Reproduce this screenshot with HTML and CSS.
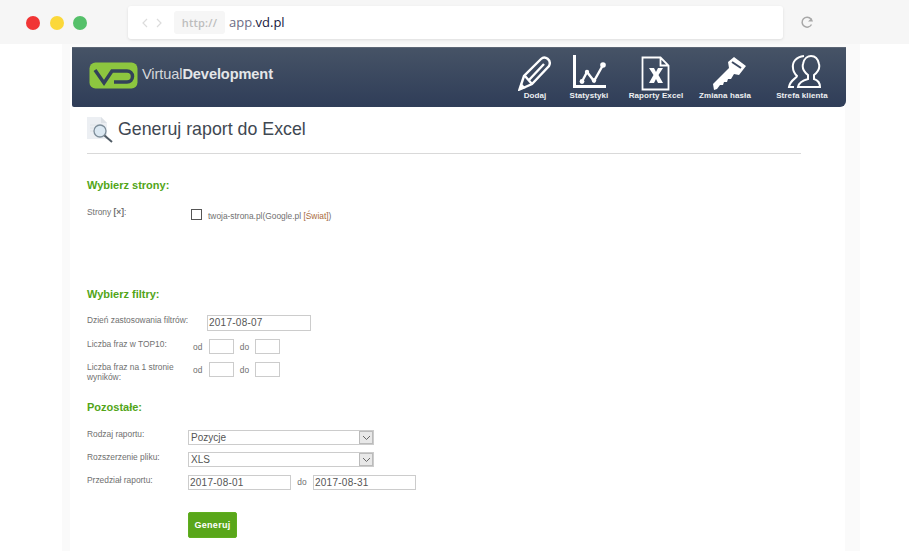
FILE: index.html
```html
<!DOCTYPE html>
<html lang="pl">
<head>
<meta charset="utf-8">
<title>Generuj raport do Excel</title>
<link rel="stylesheet" href="styles.css">
</head>
<body>
<div class="chrome">
  <div class="lights"><i class="light red"></i><i class="light yellow"></i><i class="light green"></i></div>
  <div class="address">
    <svg class="nav" width="32" height="12" viewBox="0 0 32 12"><path d="M6 2 2 6l4 4M16 2l4 4-4 4" fill="none" stroke="#dcdcdc" stroke-width="1.2"/></svg>
    <span class="scheme">http://</span>
    <span class="url">app.<b>vd.pl</b></span>
  </div>
  <svg class="reload" width="14" height="14" viewBox="0 0 14 14"><path d="M11.500 9.500A5 5 0 1 1 11 4" fill="none" stroke="#a8a8a8" stroke-width="1.500"/><path d="M13.500 6.500h-5L12 3z" fill="#a8a8a8" transform="translate(-.5 0)"/></svg>
</div>
<div class="stage">
  <div class="sheet">
    <header class="topbar">
      <div class="brand">
        <svg width="50" height="27" viewBox="0 0 50 27"><rect x=".5" y=".5" width="48" height="26" rx="6" fill="#8dc63f"/><path d="M6 8l9 13 8-12h15a5.500 5.500 0 0 1 0 11H25" fill="none" stroke="#33415a" stroke-width="3.500"/></svg>
        <span class="wordmark">Virtual<b>Development</b></span>
      </div>
      <nav class="menu">
        <a class="item w-dodaj"><svg width="34" height="36" viewBox="0 0 34 36"><path d="M1.500 34.500 6 21 23 4c4-4 11 1 8 7L14 29Z" fill="none" stroke="#fff" stroke-width="2.400"/><path d="M11 25 26 9M7 21l7 8" fill="none" stroke="#fff" stroke-width="2.400"/><path d="M1 35l2-7 5 5z" fill="#fff"/></svg><span>Dodaj</span></a>
        <a class="item w-stat"><svg width="34" height="36" viewBox="0 0 34 36"><path d="M1.500 0v31.500H33" fill="none" stroke="#fff" stroke-width="3"/><path d="M9 26.500 14 17l7 9 9-16" fill="none" stroke="#fff" stroke-width="2.400"/><circle cx="9" cy="26.500" r="2.400" fill="#fff"/><circle cx="14" cy="17" r="2.200" fill="#fff"/><circle cx="21" cy="25.500" r="2.200" fill="#fff"/><circle cx="30" cy="10" r="2.800" fill="#fff"/></svg><span>Statystyki</span></a>
        <a class="item w-excel"><svg width="30" height="36" viewBox="0 0 30 36"><path d="M1.500 2.500h18l8 8v24h-26zM19.500 2.500v8h8" fill="none" stroke="#fff" stroke-width="1.800"/><path d="M8 13h5l2 4 2-4h5l-4.500 7L22 28h-5l-2-4-2 4H8l4.500-8z" fill="#fff"/></svg><span>Raporty Excel</span></a>
        <a class="item w-key"><svg width="34" height="36" viewBox="0 0 34 36"><path d="M21 2 33 11 26 20 21 19 18 24 15 24 14 27 11 27 10 30 7 30 4 34 1 35 0 29 16 13 15 7Z" fill="#fff"/><path d="M19 7l9 6" stroke="#3c4a62" stroke-width="2"/></svg><span>Zmiana hasła</span></a>
        <a class="item w-client"><svg width="34" height="36" viewBox="0 0 34 36"><path d="M11 32C12 27 17 25 21 24V20C17 17 15 13 16 9 17 3 21 1 24 1 28 1 31 4 32 9 33 13 31 17 27 20V24C30 25 33 27 33 32Z" fill="none" stroke="#fff" stroke-width="2"/><path d="M17 1C9 2 5 7 6 13 6 16 8 19 10 21 10 23 3 25 2 32H7" fill="none" stroke="#fff" stroke-width="2"/></svg><span>Strefa klienta</span></a>
      </nav>
    </header>
    <main class="content">
      <div class="title-row">
        <svg width="28" height="27" viewBox="0 0 28 27"><path d="M0 0h14l6 6v16H0z" fill="#eceff3"/><path d="M14 0v6h6" fill="#dde1e6"/><path d="M3 8h12M3 11h7M3 14h5" stroke="#e0e4e8"/><circle cx="13" cy="14" r="6" fill="#dbe8f2" stroke="#7d8d99" stroke-width="1.300"/><path d="M17.500 18.500 25 25" stroke="#4f5a64" stroke-width="2"/></svg>
        <h1>Generuj raport do Excel</h1>
      </div>
      <section class="sec-strony">
        <h2>Wybierz strony:</h2>
        <div class="row-pages">
          <span class="lbl lbl-pages">Strony <b>[×]</b>:</span>
          <i class="check"></i>
          <span class="lbl site">twoja-strona.pl(Google.pl <span class="loc">[Świat]</span>)</span>
        </div>
      </section>
      <section class="sec-filtry">
        <h2>Wybierz filtry:</h2>
        <div class="form-rows">
          <div class="frow f1"><span class="lbl">Dzień zastosowania filtrów:</span><span class="field date-a">2017-08-07</span></div>
          <div class="frow f2"><span class="lbl">Liczba fraz w TOP10:</span><span class="pair"><span class="lbl">od</span><span class="field small"></span><span class="lbl">do</span><span class="field small"></span></span></div>
          <div class="frow f3"><span class="lbl">Liczba fraz na 1 stronie wyników:</span><span class="pair"><span class="lbl">od</span><span class="field small"></span><span class="lbl">do</span><span class="field small"></span></span></div>
        </div>
      </section>
      <section class="sec-other">
        <h2>Pozostałe:</h2>
        <div class="other-rows">
          <div class="grow g1"><span class="lbl">Rodzaj raportu:</span><span class="select"><span>Pozycje</span><i class="arrow"><svg width="9" height="6" viewBox="0 0 9 6"><path d="M1 1l3.500 3.500L8 1" fill="none" stroke="#666"/></svg></i></span></div>
          <div class="grow"><span class="lbl">Rozszerzenie pliku:</span><span class="select"><span>XLS</span><i class="arrow"><svg width="9" height="6" viewBox="0 0 9 6"><path d="M1 1l3.500 3.500L8 1" fill="none" stroke="#666"/></svg></i></span></div>
          <div class="grow"><span class="lbl">Przedział raportu:</span><span class="range"><span class="field date-b">2017-08-01</span><span class="lbl">do</span><span class="field date-b">2017-08-31</span></span></div>
        </div>
        <button class="go" type="button">Generuj</button>
      </section>
    </main>
  </div>
</div>
</body>
</html>
```
FILE: styles.css
```css
* { box-sizing: border-box; }
html, body { margin: 0; height: 551px; overflow: hidden; background: #fff; font-family: "Liberation Sans", Arial, sans-serif; }
.chrome { height: 44px; background: #f6f6f6; display: flex; align-items: flex-start; }
.lights { display: flex; gap: 9.500px; padding: 16px 0 0 26px; width: 128px; }
.light { width: 14px; height: 14px; border-radius: 50%; }
.red { background: #f13535; }
.yellow { background: #fbd83a; }
.green { background: #55c06a; }
.address { margin-top: 6px; width: 655px; height: 33px; background: #fff; border-radius: 3px; box-shadow: 0 1px 3px rgba(0,0,0,.1); display: flex; align-items: center; padding: 0 0 1px 13px; }
.nav { flex: none; margin-top: 1px; }
.scheme { width: 51px; height: 23px; margin-left: 1px; border-radius: 3px; background: #f6f6f6; color: #bdbdbd; font: 600 11px/23px "Open Sans", sans-serif; text-align: center; letter-spacing: .2px; }
.url { margin-left: 4px; margin-top: -1px; font: 13px "Open Sans", sans-serif; color: #6c6c85; }
.url b { font-weight: 400; color: #181840; }
.reload { margin: 15px 0 0 17px; }
.stage { margin-left: 62px; width: 798px; height: 507px; background: #fafafa; padding: 3px 0 0 8px; }
.sheet { width: 775px; height: 504px; background: #fff; }
.topbar { margin-left: 2px; width: 774px; height: 60px; background: linear-gradient(#465366, #2f3d58); border-top: 1px solid #5c6675; border-radius: 0 0 6px 2px; display: flex; justify-content: space-between; }
.brand { display: flex; align-items: center; gap: 3px; padding: 0 0 4px 17px; }
.wordmark { margin-bottom: 3px; font: 14.600px "Liberation Sans", sans-serif; color: #d5d8dc; letter-spacing: -.1px; }
.wordmark b { color: #e4e6e8; }
.menu { display: flex; align-items: flex-start; padding-right: 4px; }
.item { display: flex; flex-direction: column; align-items: center; padding-top: 7px; color: #eef0f2; font: 700 8px "Liberation Sans", sans-serif; letter-spacing: .1px; white-space: nowrap; }
.w-dodaj { width: 38px; }
.w-stat { width: 70px; }
.w-stat svg { margin-left: 2px; }
.w-excel { width: 64px; }
.w-key { width: 74px; }
.w-key svg { margin-left: 10px; }
.w-client { width: 80px; }
.w-client svg { margin-left: 4px; }
.content { padding: 10px 44px 0 17px; }
.title-row { display: flex; align-items: flex-start; gap: 3px; height: 37px; border-bottom: 1px solid #d9d9d9; }
h1 { margin: 1px 0 0; font: 400 17.800px/22px "Liberation Sans", sans-serif; color: #3f4852; }
h2 { margin: 0; font: 700 11px/14px "Liberation Sans", sans-serif; color: #52a518; }
.lbl { font-size: 8.400px; line-height: 10px; color: #707070; }
.sec-strony { padding-top: 24px; }
.row-pages { display: flex; align-items: flex-start; padding-top: 15px; height: 95px; }
.lbl-pages { width: 104px; }
.check { width: 11px; height: 11px; border: 1px solid #555; background: #fff; margin-top: 2px; }
.site { margin-left: 6px; margin-top: 4px; }
.loc { color: #a86a3a; }
.form-rows { padding-top: 14px; }
.frow { display: flex; }
.frow > .lbl { width: 120px; }
.f1 { height: 24px; }
.f2 { height: 23px; }
.f3 { height: 38px; }
.field { display: block; height: 15px; border: 1px solid #ccc; background: #fff; font-size: 10px; line-height: 13px; color: #555; padding-left: 1px; letter-spacing: .25px; }
.date-a { width: 104px; height: 16px; line-height: 14px; }
.date-b { width: 103px; }
.small { width: 25px; }
.pair { display: flex; align-items: center; height: 15px; margin-left: -14px; }
.pair .lbl:first-child { width: 16px; }
.pair .small + .lbl { width: 21px; text-align: center; }
.other-rows { padding-top: 16px; }
.grow { display: flex; height: 23px; }
.g1 { height: 22px; }
.g1 > .lbl { margin-top: -1px; }
.grow > .lbl { width: 101px; }
.select { width: 186px; height: 15px; border: 1px solid #ccc; background: #fff; display: flex; justify-content: space-between; font-size: 10px; line-height: 13px; color: #555; padding-left: 2px; }
.arrow { width: 14px; height: 13px; background: #e8e8e8; border: 1px solid #bbb; display: flex; align-items: center; justify-content: center; }
.range { display: flex; align-items: flex-start; }
.range .lbl { width: 22px; text-align: center; line-height: 15px; }
.go { display: block; margin: 14px 0 0 101px; width: 49px; height: 26px; padding: 0; border: 1px solid #5fae1f; border-radius: 2px; background: #59a61a; color: #fff; font: 700 9px "Liberation Sans", sans-serif; letter-spacing: .3px; }
```
